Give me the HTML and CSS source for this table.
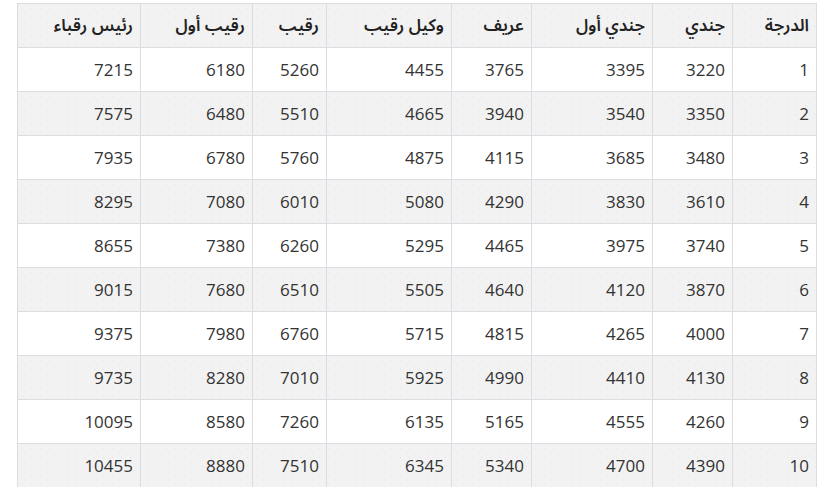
FILE: index.html
```html
<!DOCTYPE html>
<html lang="ar" dir="rtl">
<head>
<meta charset="utf-8">
<link rel="stylesheet" href="styles.css">
</head>
<body>
<div class="wrap">
<table class="grades">
<colgroup>
<col class="c1"><col class="c2"><col class="c3"><col class="c4"><col class="c5"><col class="c6"><col class="c7"><col class="c8">
</colgroup>
<thead>
<tr><th>الدرجة</th><th>جندي</th><th>جندي أول</th><th>عريف</th><th>وكيل رقيب</th><th>رقيب</th><th>رقيب أول</th><th>رئيس رقباء</th></tr>
</thead>
<tbody>
<tr><td>1</td><td>3220</td><td>3395</td><td>3765</td><td>4455</td><td>5260</td><td>6180</td><td>7215</td></tr>
<tr><td>2</td><td>3350</td><td>3540</td><td>3940</td><td>4665</td><td>5510</td><td>6480</td><td>7575</td></tr>
<tr><td>3</td><td>3480</td><td>3685</td><td>4115</td><td>4875</td><td>5760</td><td>6780</td><td>7935</td></tr>
<tr><td>4</td><td>3610</td><td>3830</td><td>4290</td><td>5080</td><td>6010</td><td>7080</td><td>8295</td></tr>
<tr><td>5</td><td>3740</td><td>3975</td><td>4465</td><td>5295</td><td>6260</td><td>7380</td><td>8655</td></tr>
<tr><td>6</td><td>3870</td><td>4120</td><td>4640</td><td>5505</td><td>6510</td><td>7680</td><td>9015</td></tr>
<tr><td>7</td><td>4000</td><td>4265</td><td>4815</td><td>5715</td><td>6760</td><td>7980</td><td>9375</td></tr>
<tr><td>8</td><td>4130</td><td>4410</td><td>4990</td><td>5925</td><td>7010</td><td>8280</td><td>9735</td></tr>
<tr><td>9</td><td>4260</td><td>4555</td><td>5165</td><td>6135</td><td>7260</td><td>8580</td><td>10095</td></tr>
<tr><td>10</td><td>4390</td><td>4700</td><td>5340</td><td>6345</td><td>7510</td><td>8880</td><td>10455</td></tr>
</tbody>
</table>
</div>
</body>
</html>
```
FILE: styles.css
```css
html, body {
  margin: 0;
  padding: 0;
  background: #ffffff;
}
.wrap {
  padding: 3px 11px 0 17px;
}
.grades {
  width: 800px;
  table-layout: fixed;
  border-collapse: collapse;
  font-family: "Open Sans", "Noto Sans Arabic", "DejaVu Sans", sans-serif;
  font-size: 17px;
  color: #333;
}
.c1 { width: 84px; }
.c2 { width: 80px; }
.c3 { width: 121px; }
.c4 { width: 80px; }
.c5 { width: 125px; }
.c6 { width: 74px; }
.c7 { width: 112px; }
.c8 { width: 123px; }
.grades tr {
  height: 44px;
}
.grades th,
.grades td {
  border: 1px solid #dcdde2;
  padding: 0 7px;
  text-align: right;
  vertical-align: middle;
  white-space: nowrap;
}
.grades th {
  font-weight: 600;
  color: #222;
}
.grades thead tr,
.grades tbody tr:nth-child(even) {
  background-color: #f2f2f2;
  background-image: radial-gradient(circle, #e2e2e6 0.7px, transparent 1px);
  background-size: 9px 9px;
}
```
